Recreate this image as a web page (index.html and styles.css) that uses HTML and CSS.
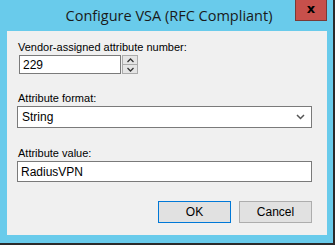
FILE: index.html
```html
<!DOCTYPE html>
<html lang="en">
<head>
    <meta charset="UTF-8">
    <title>Configure VSA</title>
    <link rel="stylesheet" href="styles.css">
</head>
<body>
<div id="window">
    <div id="titlebar">
        <span id="title">Configure VSA (RFC Compliant)</span>
        <span id="close">x</span>
    </div>
    <div id="client">
        <label class="lbl">Vendor-assigned attribute number:</label>
        <div class="spinrow">
            <div class="box num">229</div>
            <div class="spin">
                <span class="up"><svg width="7" height="5" viewBox="0 0 7 5"><path d="M0.5 4L3.5 1L6.5 4" fill="none" stroke="#333" stroke-width="1.3"/></svg></span>
                <span class="down"><svg width="7" height="5" viewBox="0 0 7 5"><path d="M0.5 1L3.5 4L6.5 1" fill="none" stroke="#333" stroke-width="1.3"/></svg></span>
            </div>
        </div>
        <label class="lbl gap">Attribute format:</label>
        <div class="box select">
            <span>String</span>
            <svg width="9" height="6" viewBox="0 0 9 6"><path d="M1 1L4.5 4.5L8 1" fill="none" stroke="#555" stroke-width="1.5"/></svg>
        </div>
        <label class="lbl gap2">Attribute value:</label>
        <div class="box text">RadiusVPN</div>
        <div id="buttons">
            <span class="btn ok">OK</span>
            <span class="btn">Cancel</span>
        </div>
    </div>
</div>
</body>
</html>
```
FILE: styles.css
```css
*{
    margin: 0;
    padding: 0;
    box-sizing: border-box;
}
body{
    width: 335px;
    height: 247px;
    background: #ffffff;
    font-family: "Liberation Sans", Arial, sans-serif;
    font-size: 11px;
    color: #000;
    overflow: hidden;
}
#window{
    width: 335px;
    height: 245px;
    background: #69cbeb;
    border-right: 2px solid #2b2b2b;
    border-bottom: 2px solid #2b2b2b;
    padding: 0 6px 8px 7px;
    display: flex;
    flex-direction: column;
}
#titlebar{
    height: 31px;
    display: flex;
    justify-content: center;
    position: relative;
}
#title{
    font-family: "Open Sans", "Noto Sans", sans-serif;
    font-size: 14.5px;
    line-height: 31px;
    color: #1a1a1a;
    margin-left: 4px;
}
#close{
    position: absolute;
    top: 0;
    right: 0;
    width: 32px;
    height: 21px;
    background: #c7504b;
    border: 1px solid #7a3a36;
    border-top: 0;
    text-align: center;
    font-family: "DejaVu Sans", sans-serif;
    font-weight: bold;
    font-size: 13px;
    line-height: 17px;
    color: #000;
}
#client{
    flex: 1;
    background: #f0f0f0;
    padding: 8px 15px 0 10px;
    display: flex;
    flex-direction: column;
}
.lbl{
    display: block;
    height: 16px;
    line-height: 16px;
    margin-left: 1px;
}
.gap{
    margin-top: 16px;
}
.gap2{
    margin-top: 17px;
}
.box{
    background: #fff;
    border: 1px solid #7a7a7a;
    display: flex;
    align-items: center;
    padding-left: 3px;
}
.spinrow{
    display: flex;
    gap: 1px;
    margin-left: 2px;
    height: 19px;
}
.num{
    width: 102px;
    font-size: 12px;
}
.spin{
    width: 16px;
    display: flex;
    flex-direction: column;
    border: 1px solid #ababab;
    background: #e5e5e5;
}
.spin span{
    flex: 1;
    display: flex;
    align-items: center;
    justify-content: center;
}
.spin .up{
    border-bottom: 1px solid #ababab;
}
.select{
    height: 22px;
    justify-content: space-between;
    padding: 0 6px 0 4px;
    font-size: 12px;
}
.text{
    height: 21px;
    font-size: 12px;
}
#buttons{
    display: flex;
    justify-content: flex-end;
    gap: 8px;
    margin-top: 19px;
}
.btn{
    width: 73px;
    height: 22px;
    background: #e1e1e1;
    border: 1px solid #adadad;
    text-align: center;
    line-height: 20px;
    font-size: 12px;
}
.ok{
    border-color: #0078d7;
}
```
